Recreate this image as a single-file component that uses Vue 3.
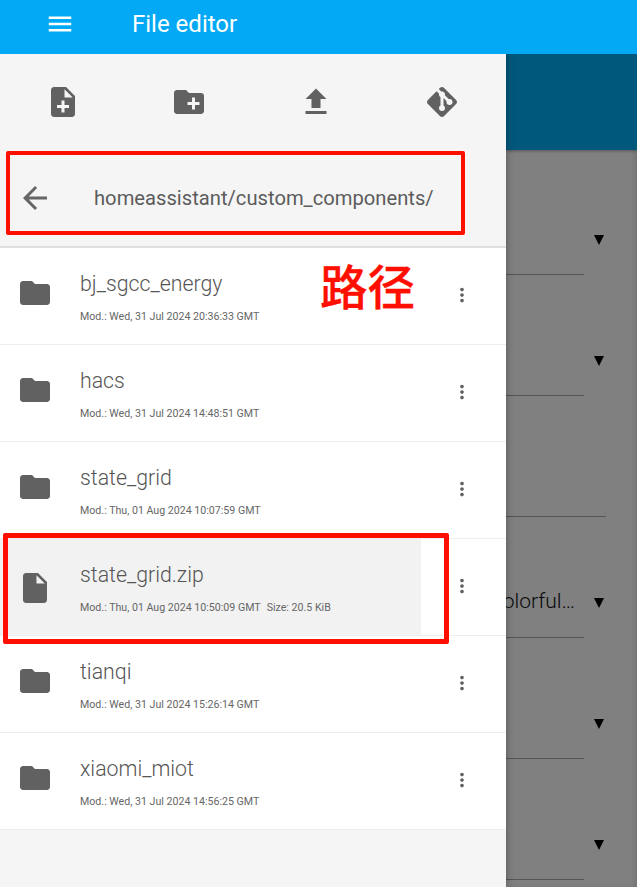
<template>
  <div class="page">
    <header class="topbar">
      <svg class="menu-icon" viewBox="0 0 24 24"><path d="M3 18h18v-2H3v2zm0-5h18v-2H3v2zm0-7v2h18V6H3z" /></svg>
      <span class="topbar-title">File editor</span>
    </header>

    <div class="content">
      <aside class="drawer">
        <div class="drawer-head">
          <div class="actions">
            <svg v-for="a in actions" :key="a" class="action-icon" viewBox="0 0 24 24"><path :d="a" /></svg>
          </div>
          <div class="path-row">
            <svg class="back-icon" viewBox="0 0 24 24"><path d="M20 11H7.83l5.59-5.59L12 4l-8 8 8 8 1.41-1.41L7.83 13H20v-2z" /></svg>
            <span class="path-text">homeassistant/custom_components/</span>
          </div>
        </div>

        <ul class="file-list">
          <li v-for="f in files" :key="f.name" class="file-row">
            <div class="file-main" :class="{ selected: f.size }">
              <svg class="file-icon" :class="f.size ? 'is-file' : 'is-folder'" viewBox="0 0 24 24">
                <path :d="f.size ? fileIcon : folderIcon" />
              </svg>
              <div class="file-text">
                <div class="file-name">{{ f.name }}</div>
                <div class="file-meta">Mod.: {{ f.mod }}<span v-if="f.size" class="file-size">Size: {{ f.size }}</span></div>
              </div>
            </div>
            <div class="file-more">
              <svg class="more-icon" viewBox="0 0 24 24"><path d="M12 8c1.1 0 2-.9 2-2s-.9-2-2-2-2 .9-2 2 .9 2 2 2zm0 2c-1.1 0-2 .9-2 2s.9 2 2 2 2-.9 2-2-.9-2-2-2zm0 6c-1.1 0-2 .9-2 2s.9 2 2 2 2-.9 2-2-.9-2-2-2z" /></svg>
            </div>
          </li>
        </ul>
      </aside>

      <main class="behind">
        <div class="behind-band"></div>
        <div class="fields">
          <div v-for="(field, i) in fields" :key="i" class="field">
            <div class="field-box" :class="{ wide: field.wide }">
              <span v-if="field.text" class="field-value">{{ field.text }}</span>
            </div>
            <span v-if="!field.wide" class="caret"></span>
          </div>
        </div>
      </main>
    </div>

    <!-- red annotations drawn on top of the screenshot -->
    <div class="mark mark-path"></div>
    <div class="mark mark-file"></div>
    <div class="mark-label">路径</div>
  </div>
</template>

<script setup>
const folderIcon = 'M10 4H4c-1.1 0-1.99.9-1.99 2L2 18c0 1.1.9 2 2 2h16c1.1 0 2-.9 2-2V8c0-1.1-.9-2-2-2h-8l-2-2z'
const fileIcon = 'M6 2c-1.1 0-1.99.9-1.99 2L4 20c0 1.1.89 2 1.99 2H18c1.1 0 2-.9 2-2V8l-6-6H6zm7 7V3.5L18.5 9H13z'

const actions = [
  'M14 2H6c-1.1 0-1.99.9-1.99 2L4 20c0 1.1.89 2 1.99 2H18c1.1 0 2-.9 2-2V8l-6-6zm2 14h-3v3h-2v-3H8v-2h3v-3h2v3h3v2zm-3-7V3.5L18.5 9H13z',
  'M20 6h-8l-2-2H4c-1.11 0-1.99.89-1.99 2L2 18c0 1.11.89 2 2 2h16c1.11 0 2-.89 2-2V8c0-1.11-.89-2-2-2zm-1 8h-3v3h-2v-3h-3v-2h3V9h2v3h3v2z',
  'M9 16h6v-6h4l-7-7-7 7h4zm-4 2h14v2H5z',
  'M2.6,10.59L8.38,4.8L10.07,6.5C9.83,7.35 10.22,8.28 11,8.73V14.27C10.4,14.61 10,15.26 10,16A2,2 0 0,0 12,18A2,2 0 0,0 14,16C14,15.26 13.6,14.61 13,14.27V9.41L15.07,11.5C15,11.65 15,11.82 15,12A2,2 0 0,0 17,14A2,2 0 0,0 19,12A2,2 0 0,0 17,10C16.82,10 16.65,10 16.5,10.07L13.93,7.5C14.19,6.57 13.71,5.55 12.78,5.16C12.35,5 11.9,4.96 11.5,5.07L9.8,3.38L10.59,2.6C11.37,1.81 12.63,1.81 13.41,2.6L21.4,10.59C22.19,11.37 22.19,12.63 21.4,13.41L13.41,21.4C12.63,22.19 11.37,22.19 10.59,21.4L2.6,13.41C1.81,12.63 1.81,11.37 2.6,10.59Z',
]

const files = [
  { name: 'bj_sgcc_energy', mod: 'Wed, 31 Jul 2024 20:36:33 GMT' },
  { name: 'hacs', mod: 'Wed, 31 Jul 2024 14:48:51 GMT' },
  { name: 'state_grid', mod: 'Thu, 01 Aug 2024 10:07:59 GMT' },
  { name: 'state_grid.zip', mod: 'Thu, 01 Aug 2024 10:50:09 GMT', size: '20.5 KiB' },
  { name: 'tianqi', mod: 'Wed, 31 Jul 2024 15:26:14 GMT' },
  { name: 'xiaomi_miot', mod: 'Wed, 31 Jul 2024 14:56:25 GMT' },
]

const fields = [{}, {}, { wide: true }, { text: 'Colorful…' }, {}, {}]
</script>

<style>
html,
body {
  margin: 0;
  background: #808080;
}
</style>

<style scoped>
.page {
  position: relative;
  width: 637px;
  height: 887px;
  overflow: hidden;
  font-family: Roboto, sans-serif;
  display: flex;
  flex-direction: column;
}
.topbar {
  flex: 0 0 54px;
  box-sizing: border-box;
  padding: 0 0 6px 45px;
  background: #03a9f4;
  display: flex;
  align-items: center;
  position: relative;
  z-index: 2;
}
.menu-icon {
  width: 30px;
  height: 30px;
  fill: #fff;
}
.topbar-title {
  margin-left: 57px;
  color: #fff;
  font-size: 24px;
}
.content {
  flex: 1;
  display: flex;
  min-height: 0;
}
.drawer {
  flex: 0 0 506px;
  background: #f5f5f5;
  box-shadow: 0 0 8px rgba(0, 0, 0, 0.35);
  position: relative;
  z-index: 1;
}
.drawer-head {
  height: 194px;
  box-sizing: border-box;
  border-bottom: 2px solid #e0e0e0;
}
.actions {
  height: 96px;
  padding-right: 1px;
  display: grid;
  grid-template-columns: repeat(4, 1fr);
  justify-items: center;
  align-items: center;
}
.action-icon {
  width: 36px;
  height: 36px;
  fill: #616161;
}
.path-row {
  height: 96px;
  display: flex;
  align-items: center;
  padding-left: 17px;
}
.back-icon {
  width: 36px;
  height: 36px;
  fill: #666;
}
.path-text {
  margin-left: 41px;
  font-size: 20.2px;
  color: #5c5c5c;
}
.file-list {
  list-style: none;
  margin: 0;
  padding: 0;
}
.file-row {
  height: 97px;
  box-sizing: border-box;
  background: #fff;
  border-bottom: 1px solid #eee;
  display: flex;
}
.file-main {
  flex: 0 0 421px;
  display: flex;
  align-items: center;
  padding-left: 17px;
  box-sizing: border-box;
}
.file-main.selected {
  background: #f2f2f2;
}
.file-icon {
  flex: none;
  width: 36px;
  height: 36px;
  fill: #616161;
}
.is-folder {
  margin-bottom: 7px;
}
.is-file {
  margin-top: 1px;
}
.file-text {
  margin-left: 27px;
  align-self: flex-start;
  padding-top: 24px;
  color: #666;
}
.file-name {
  font-size: 21.3px;
  font-weight: 300;
  line-height: 24px;
  color: #555;
}
.file-meta {
  margin-top: 13px;
  font-size: 10.64px;
  line-height: 16px;
  white-space: nowrap;
}
.file-size {
  margin-left: 6px;
}
.file-more {
  flex: 1;
  display: flex;
  align-items: center;
  padding-left: 30px;
  padding-bottom: 2px;
}
.more-icon {
  width: 22px;
  height: 22px;
  fill: #616161;
}
.behind {
  flex: 1;
  background: #808080;
  box-shadow: inset -3px 0 4px rgba(0, 0, 0, 0.08);
}
.behind-band {
  height: 96px;
  background: #01587d;
  box-shadow: 0 1px 3px rgba(0, 0, 0, 0.35);
}
.fields {
  padding-top: 4px;
}
.field {
  height: 121px;
  display: flex;
  align-items: flex-end;
}
.field-box {
  width: 78px;
  height: 100%;
  box-sizing: border-box;
  border-bottom: 1px solid #555;
  display: flex;
  justify-content: flex-end;
  align-items: flex-end;
  padding: 0 9px 24px 0;
}
.field-box.wide {
  width: 100px;
}
.field-value {
  font-size: 21px;
  font-weight: 300;
  line-height: 24px;
  color: #0a0a0a;
  white-space: nowrap;
}
.caret {
  margin: 0 0 30px 10px;
  width: 0;
  height: 0;
  border-left: 5px solid transparent;
  border-right: 5px solid transparent;
  border-top: 10px solid #000;
}
.mark {
  position: absolute;
  box-sizing: border-box;
  border-style: solid;
  border-color: #ff0f00;
  border-radius: 2px;
  z-index: 3;
}
.mark-path {
  left: 6px;
  top: 151px;
  width: 459px;
  height: 84px;
  border-width: 4px;
}
.mark-file {
  left: 3px;
  top: 533px;
  width: 446px;
  height: 111px;
  border-width: 5px;
}
.mark-label {
  position: absolute;
  left: 320px;
  top: 253px;
  z-index: 3;
  font-family: "Noto Sans CJK SC", sans-serif;
  font-size: 47.5px;
  line-height: 64px;
  font-weight: 500;
  -webkit-text-stroke: 0.3px #ff0f00;
  color: #ff0f00;
  white-space: nowrap;
}
</style>
